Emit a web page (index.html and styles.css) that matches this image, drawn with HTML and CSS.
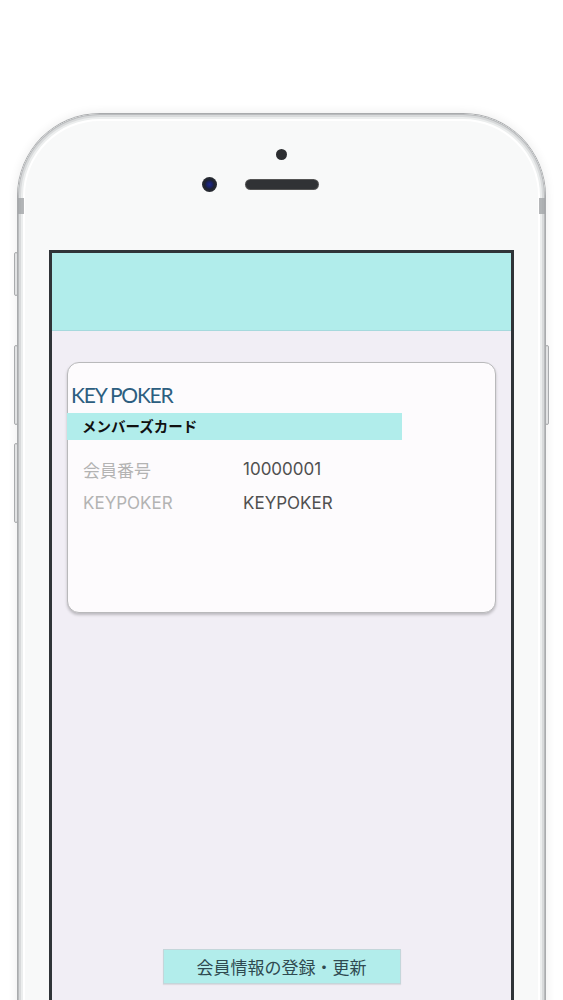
FILE: index.html
```html
<!DOCTYPE html>
<html lang="ja">
<head>
<meta charset="utf-8">
<title>KEY POKER メンバーズカード</title>
<link rel="stylesheet" href="styles.css">
</head>
<body>
<div class="stage">
  <div class="phone">
    <span class="side-btn left mute"></span>
    <span class="side-btn left vol-up"></span>
    <span class="side-btn left vol-down"></span>
    <span class="side-btn right power"></span>
    <span class="antenna left"></span>
    <span class="antenna right"></span>

    <div class="phone-top">
      <span class="sensor"></span>
      <div class="ear-row">
        <span class="camera"></span>
        <span class="speaker"></span>
        <span class="ear-spacer"></span>
      </div>
    </div>

    <div class="screen">
      <header class="app-header"></header>
      <main class="app-body">
        <section class="card">
          <h1 class="card-title">KEY POKER</h1>
          <div class="card-band">メンバーズカード</div>
          <dl class="card-rows">
            <div class="card-row">
              <dt>会員番号</dt>
              <dd>10000001</dd>
            </div>
            <div class="card-row">
              <dt>KEYPOKER</dt>
              <dd>KEYPOKER</dd>
            </div>
          </dl>
        </section>
        <button class="update-btn" type="button">会員情報の登録・更新</button>
      </main>
    </div>
  </div>
</div>
</body>
</html>
```
FILE: styles.css
```css
* { box-sizing: border-box; }

html, body {
  margin: 0;
  padding: 0;
  background: #ffffff;
}

body {
  font-family: Inter, "Noto Sans CJK JP", sans-serif;
  overflow: hidden;
}

.stage {
  width: 563px;
  height: 1000px;
  overflow: hidden;
  padding-top: 114px;
}

.phone {
  position: relative;
  margin-left: 18px;
  width: 527px;
  height: 1000px;
  border-radius: 82px 82px 0 0;
  background: #f8f9f9;
  box-shadow:
    0 0 0 1px #a9abad,
    inset 0 0 0 1px #b9bbbd,
    inset 0 0 0 3px #d8dadb,
    inset 0 0 0 5px #eceeee,
    inset 0 0 0 7px #ffffff,
    0 0 10px 2px rgba(0, 0, 0, 0.07);
  padding-left: 31px;
}

/* hardware details */
.side-btn {
  position: absolute;
  width: 4px;
  background: linear-gradient(90deg, #c9cbcd, #fbfbfb 50%, #c9cbcd);
  border: 1px solid #a9abad;
  border-radius: 2px;
}
.side-btn.left { left: -4px; }
.side-btn.right { right: -4px; }
.mute { top: 138px; height: 44px; }
.vol-up { top: 231px; height: 80px; }
.vol-down { top: 329px; height: 80px; }
.power { top: 231px; height: 80px; }

.antenna {
  position: absolute;
  top: 84px;
  width: 6px;
  height: 16px;
  background: #a3a5a7;
  opacity: 0.8;
}
.antenna.left { left: 0; }
.antenna.right { right: 0; }

.phone-top {
  height: 136px;
  margin-left: -31px;
  display: flex;
  flex-direction: column;
  align-items: center;
  padding-top: 35px;
}

.sensor {
  width: 11px;
  height: 11px;
  border-radius: 50%;
  background: #2c2e31;
}

.ear-row {
  margin-top: 17px;
  display: flex;
  align-items: center;
  gap: 29px;
}

.camera {
  width: 15px;
  height: 15px;
  border-radius: 50%;
  background: radial-gradient(circle at 50% 50%, #1d2a8a 0, #1a2266 25%, #1d2230 45%, #2a2d33 70%);
}

.speaker {
  width: 72px;
  height: 9px;
  border-radius: 5px;
  background: #303235;
  box-shadow: 0 0 0 1px #555;
}

.ear-spacer {
  width: 15px;
  height: 15px;
}

/* screen */
.screen {
  width: 465px;
  height: 900px;
  border: 3px solid #2f3438;
  border-bottom: none;
  background: #f1eef5;
}

.app-header {
  height: 78px;
  background: #b1edeb;
  border-bottom: 1px solid #a6d9dd;
}

.app-body {
  padding: 31px 15px 0;
  display: flex;
  flex-direction: column;
}

.card {
  height: 251px;
  background: #fdfbfd;
  border: 1px solid #b9b9bb;
  border-radius: 12px;
  box-shadow: 0 2px 3px rgba(0, 0, 0, 0.22);
  padding-top: 19px;
}

.card-title {
  margin: 0 0 0 3px;
  font-family: Lato, "Liberation Sans", sans-serif;
  font-weight: 400;
  font-size: 21px;
  line-height: 26px;
  letter-spacing: -1.2px;
  color: #2c5e80;
}

.card-band {
  margin-top: 5px;
  margin-left: -1px;
  width: 335px;
  height: 27px;
  background: #b1edeb;
  padding-left: 15px;
  font-size: 14.5px;
  font-weight: 700;
  line-height: 27px;
  color: #111;
}

.card-rows {
  margin: 12px 0 0;
  padding-left: 15px;
  display: flex;
  flex-direction: column;
}

.card-row {
  display: flex;
  height: 34px;
  align-items: center;
  font-size: 17px;
}

.card-row dt {
  width: 160px;
  color: #b3b3b3;
}

.card-row dd {
  margin: 0;
  color: #505050;
}

.update-btn {
  align-self: center;
  margin-top: 336px;
  width: 238px;
  height: 35px;
  background: #b2edeb;
  border: 1px solid #c4d6da;
  border-radius: 0;
  padding: 0;
  font-family: "Noto Sans CJK JP", sans-serif;
  font-size: 17px;
  color: #2f4a50;
  box-shadow: 0 1px 1px rgba(0, 0, 0, 0.08);
}
```
